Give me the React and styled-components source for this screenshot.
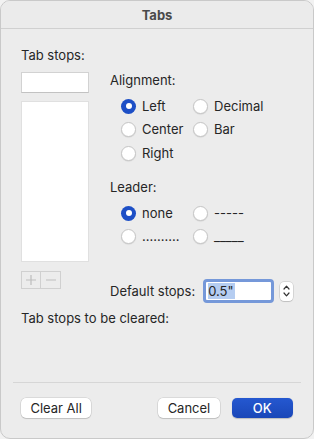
import React from 'react';
import styled, { createGlobalStyle } from 'styled-components';

const Global = createGlobalStyle`
  html, body { margin: 0; padding: 0; background: #f2f2f2; }
  body { font-family: Inter, "Noto Sans", sans-serif; font-size: 13px; color: #262626; }
`;

const Window = styled.div`
  box-sizing: border-box;
  width: 314px;
  height: 439px;
  background: #ececec;
  border: 1px solid #c9c9c9;
  border-radius: 10px;
  overflow: hidden;
  display: flex;
  flex-direction: column;
`;

const TitleBar = styled.div`
  height: 27px;
  flex: none;
  display: flex;
  align-items: center;
  justify-content: center;
  background: #ebebeb;
  border-bottom: 1px solid #d0d0d0;
  font-weight: 700;
  color: #4a4a4a;
`;

const Body = styled.div`
  flex: 1;
  padding: 18px 20px 0 20px;
  display: flex;
  flex-direction: column;
`;

const Label = styled.div`
  line-height: 16px;
  margin-top: ${p => p.$top || 0}px;
  white-space: nowrap;
`;

const Main = styled.div`
  display: flex;
  gap: 21px;
  margin-top: 9px;
`;

const LeftCol = styled.div`
  width: 68px;
  flex: none;
  display: flex;
  flex-direction: column;
`;

const TextField = styled.div`
  box-sizing: border-box;
  height: 21px;
  background: #fff;
  border: 1px solid #d2d2d2;
  border-bottom-color: #c2c2c2;
`;

const ListBox = styled.div`
  box-sizing: border-box;
  height: 161px;
  margin-top: 8px;
  background: #fff;
  border: 1px solid #e0e0e0;
`;

const Segmented = styled.div`
  display: flex;
  margin-top: 9px;
`;

const SegButton = styled.div`
  box-sizing: border-box;
  width: 20px;
  height: 18px;
  border: 1px solid #d0d0d0;
  border-left-width: ${p => (p.$first ? 1 : 0)}px;
  display: flex;
  align-items: center;
  justify-content: center;
`;

const RightCol = styled.div`
  flex: 1;
  min-width: 0;
  display: flex;
  flex-direction: column;
`;

const RadioGrid = styled.div`
  display: grid;
  grid-template-columns: 72px auto;
  row-gap: ${p => p.$gap}px;
  padding-left: 11px;
  margin-top: 9px;
`;

const RadioItem = styled.div`
  display: flex;
  align-items: center;
  gap: 6px;
  height: 18px;
  white-space: nowrap;
  margin-top: ${p => p.$extra || 0}px;
`;

const Circle = styled.span`
  box-sizing: border-box;
  width: 15px;
  height: 15px;
  border-radius: 50%;
  flex: none;
  display: flex;
  align-items: center;
  justify-content: center;
  background: ${p => (p.$on ? '#1d4fc6' : '#fff')};
  border: ${p => (p.$on ? 'none' : '1px solid #c6c6c6')};
  box-shadow: ${p => (p.$on ? 'none' : '0 0.5px 1px rgba(0,0,0,0.12)')};
  &::after {
    content: '';
    display: ${p => (p.$on ? 'block' : 'none')};
    width: 6px;
    height: 6px;
    border-radius: 50%;
    background: #fff;
  }
`;

const StopsRow = styled.div`
  display: flex;
  align-items: center;
  margin-top: 34px;
  height: 24px;
  white-space: nowrap;
  & > * { flex: none; }
`;

const FocusField = styled.div`
  box-sizing: border-box;
  width: 71px;
  height: 24px;
  margin-left: 8px;
  border: 3px solid #7598d9;
  border-radius: 4px;
  background: #fff;
  display: flex;
  align-items: center;
  padding-left: 2px;
`;

const Selected = styled.span`
  background: #b5cdf1;
  line-height: 16px;
  padding-right: 1px;
`;

const Stepper = styled.div`
  box-sizing: border-box;
  width: 13px;
  height: 19px;
  margin-left: 6px;
  background: #fff;
  border-radius: 4px;
  box-shadow: 0 0 0 0.5px rgba(0,0,0,0.18), 0 1px 1px rgba(0,0,0,0.1);
  display: flex;
  flex-direction: column;
  align-items: center;
  justify-content: center;
  gap: 2px;
`;

const Footer = styled.div`
  flex: none;
`;

const Separator = styled.div`
  height: 1px;
  margin: 0 12px;
  background: #d6d6d6;
`;

const ButtonRow = styled.div`
  display: flex;
  align-items: center;
  padding: 15px 20px 20px 20px;
`;

const Button = styled.div`
  box-sizing: border-box;
  height: 20px;
  width: ${p => p.$w}px;
  margin-left: ${p => p.$ml || 0}px;
  border-radius: 5px;
  display: flex;
  align-items: center;
  justify-content: center;
  background: ${p => (p.$primary ? 'linear-gradient(#2558d0, #1a47b8)' : '#fff')};
  color: ${p => (p.$primary ? '#fff' : '#262626')};
  font-weight: ${p => (p.$primary ? 500 : 400)};
  box-shadow: ${p => (p.$primary ? '0 0.5px 1px rgba(0,0,0,0.2)' : '0 0 0 0.5px rgba(0,0,0,0.15), 0 1px 1px rgba(0,0,0,0.12)')};
`;

const Radio = ({ on, children, extra }) => (
  <RadioItem $extra={extra}>
    <Circle $on={on} />
    <span>{children}</span>
  </RadioItem>
);

const Chevron = ({ up }) => (
  <svg width="7" height="5" viewBox="0 0 7 5">
    <path d={up ? 'M1 4L3.5 1.2L6 4' : 'M1 1L3.5 3.8L6 1'} fill="none" stroke="#333" strokeWidth="1.2" strokeLinecap="round" strokeLinejoin="round" />
  </svg>
);

export default function App() {
  return (
    <>
      <Global />
      <Window>
        <TitleBar>Tabs</TitleBar>
        <Body>
          <Label>Tab stops:</Label>
          <Main>
            <LeftCol>
              <TextField />
              <ListBox />
              <Segmented>
                <SegButton $first>
                  <svg width="10" height="10" viewBox="0 0 10 10"><path d="M5 0v10M0 5h10" stroke="#bdbdbd" strokeWidth="1.2" /></svg>
                </SegButton>
                <SegButton>
                  <svg width="10" height="10" viewBox="0 0 10 10"><path d="M0 5h10" stroke="#bdbdbd" strokeWidth="1.2" /></svg>
                </SegButton>
              </Segmented>
            </LeftCol>
            <RightCol>
              <Label>Alignment:</Label>
              <RadioGrid $gap={5}>
                <Radio on>Left</Radio>
                <Radio>Decimal</Radio>
                <Radio>Center</Radio>
                <Radio>Bar</Radio>
                <Radio extra={1}>Right</Radio>
              </RadioGrid>
              <Label $top={17}>Leader:</Label>
              <RadioGrid $gap={5}>
                <Radio on>none</Radio>
                <Radio>-----</Radio>
                <Radio>..........</Radio>
                <Radio>_____</Radio>
              </RadioGrid>
              <StopsRow>
                <span>Default stops:</span>
                <FocusField><Selected>0.5"</Selected></FocusField>
                <Stepper>
                  <Chevron up />
                  <Chevron />
                </Stepper>
              </StopsRow>
            </RightCol>
          </Main>
          <Label $top={7}>Tab stops to be cleared:</Label>
        </Body>
        <Footer>
          <Separator />
          <ButtonRow>
            <Button $w={71}>Clear All</Button>
            <Button $w={62} $ml={67}>Cancel</Button>
            <Button $w={62} $ml={12} $primary>OK</Button>
          </ButtonRow>
        </Footer>
      </Window>
    </>
  );
}
